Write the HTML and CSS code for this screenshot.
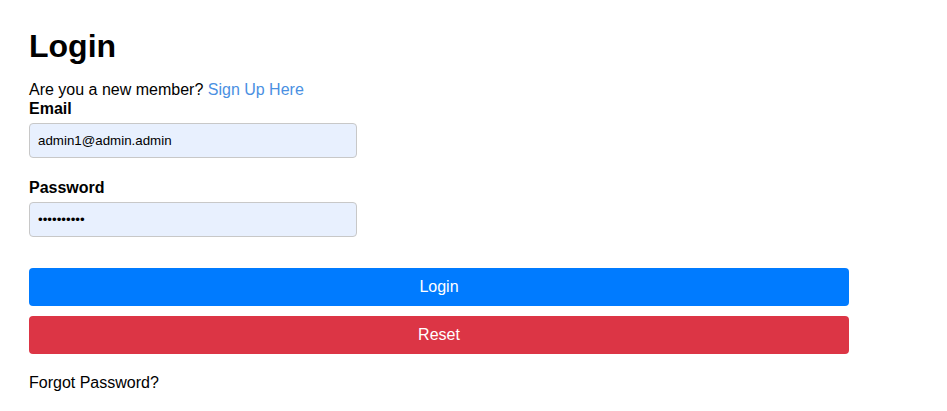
FILE: index.html
```html
<!DOCTYPE html>
<html>
<head>
<meta charset="utf-8">
<link rel="stylesheet" href="styles.css">
</head>
<body>
<div class="page">
  <h1 class="title">Login</h1>
  <p class="intro">Are you a new member? <a class="link" href="#">Sign Up Here</a></p>
  <form class="form">
    <div class="field">
      <label class="label">Email</label>
      <input class="input" type="text" value="admin1@admin.admin">
    </div>
    <div class="field">
      <label class="label">Password</label>
      <input class="input" type="password" value="1234567890">
    </div>
    <div class="actions">
      <button type="button" class="btn btn-primary">Login</button>
      <button type="button" class="btn btn-danger">Reset</button>
    </div>
  </form>
  <p class="forgot">Forgot Password?</p>
</div>
</body>
</html>
```
FILE: styles.css
```css
html, body {
  margin: 0;
  padding: 0;
  background: #fff;
}
body {
  font-family: "Liberation Sans", Arial, sans-serif;
  font-size: 16px;
  line-height: normal;
  color: #000;
}
.page {
  width: 820px;
  padding: 28px 29px 0;
}
.title {
  margin: 0 0 16px;
  font-size: 32px;
  font-weight: bold;
  line-height: 37px;
}
.intro {
  margin: 0 0 1px;
}
.link {
  color: #4a90e2;
  text-decoration: none;
}
.form {
  margin: 0;
}
.field {
  display: flex;
  flex-direction: column;
  align-items: flex-start;
  margin-bottom: 21px;
}
.label {
  font-weight: bold;
  margin-bottom: 5px;
}
.input {
  box-sizing: border-box;
  width: 328px;
  height: 35px;
  padding: 0 8px;
  font-family: "Liberation Sans", Arial, sans-serif;
  font-size: 13.33px;
  color: #000;
  background: #e8f0fe;
  border: 1px solid #c8c8c8;
  border-radius: 4px;
  outline: none;
}
.actions {
  display: flex;
  flex-direction: column;
  gap: 10px;
  padding-top: 10px;
}
.btn {
  box-sizing: border-box;
  width: 820px;
  height: 38px;
  border: none;
  border-radius: 4px;
  color: #fff;
  font-family: "Liberation Sans", Arial, sans-serif;
  font-size: 16px;
  cursor: pointer;
}
.btn-primary {
  background: #007bff;
}
.btn-danger {
  background: #dc3545;
}
.forgot {
  margin: 20px 0 0;
}
```
